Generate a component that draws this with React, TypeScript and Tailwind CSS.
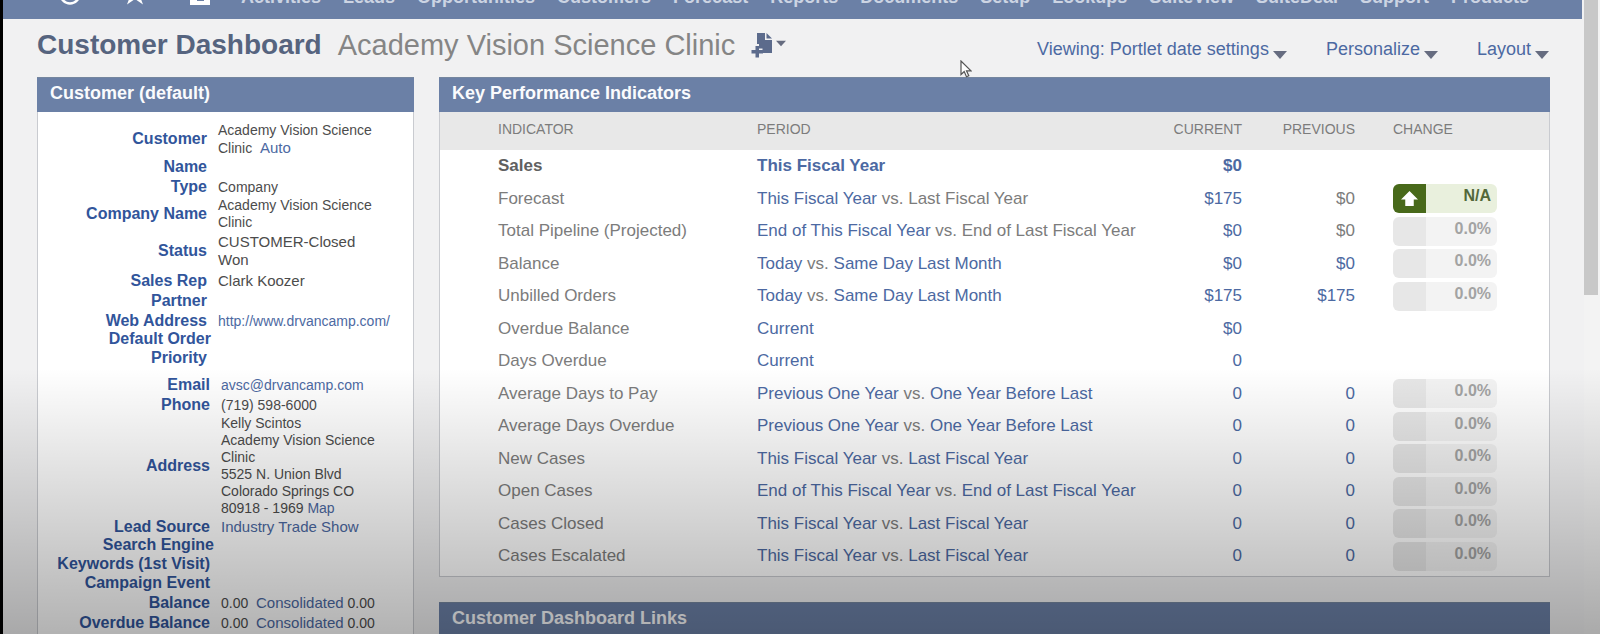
import type { ReactNode } from "react";

const navItems = [
  "Activities",
  "Leads",
  "Opportunities",
  "Customers",
  "Forecast",
  "Reports",
  "Documents",
  "Setup",
  "Lookups",
  "SuiteView",
  "SuiteDeal",
  "Support",
  "Products",
];

type Period = { text: string; link: boolean };

type Kpi = {
  name: string;
  period: Period;
  versus?: Period;
  current: string;
  previous?: string;
  previousLink?: boolean;
  change?: string;
  up?: boolean;
  bold?: boolean;
};

const link = (text: string): Period => ({ text, link: true });
const plain = (text: string): Period => ({ text, link: false });

const kpis: Kpi[] = [
  { name: "Sales", period: link("This Fiscal Year"), current: "$0", bold: true },
  { name: "Forecast", period: link("This Fiscal Year"), versus: plain("Last Fiscal Year"), current: "$175", previous: "$0", change: "N/A", up: true },
  { name: "Total Pipeline (Projected)", period: link("End of This Fiscal Year"), versus: plain("End of Last Fiscal Year"), current: "$0", previous: "$0", change: "0.0%" },
  { name: "Balance", period: link("Today"), versus: link("Same Day Last Month"), current: "$0", previous: "$0", previousLink: true, change: "0.0%" },
  { name: "Unbilled Orders", period: link("Today"), versus: link("Same Day Last Month"), current: "$175", previous: "$175", previousLink: true, change: "0.0%" },
  { name: "Overdue Balance", period: link("Current"), current: "$0" },
  { name: "Days Overdue", period: link("Current"), current: "0" },
  { name: "Average Days to Pay", period: link("Previous One Year"), versus: link("One Year Before Last"), current: "0", previous: "0", previousLink: true, change: "0.0%" },
  { name: "Average Days Overdue", period: link("Previous One Year"), versus: link("One Year Before Last"), current: "0", previous: "0", previousLink: true, change: "0.0%" },
  { name: "New Cases", period: link("This Fiscal Year"), versus: link("Last Fiscal Year"), current: "0", previous: "0", previousLink: true, change: "0.0%" },
  { name: "Open Cases", period: link("End of This Fiscal Year"), versus: link("End of Last Fiscal Year"), current: "0", previous: "0", previousLink: true, change: "0.0%" },
  { name: "Cases Closed", period: link("This Fiscal Year"), versus: link("Last Fiscal Year"), current: "0", previous: "0", previousLink: true, change: "0.0%" },
  { name: "Cases Escalated", period: link("This Fiscal Year"), versus: link("Last Fiscal Year"), current: "0", previous: "0", previousLink: true, change: "0.0%" },
];

const Link = ({ children }: { children: ReactNode }) => (
  <a href="#" className="text-[#4c69a2]">
    {children}
  </a>
);

const Caret = ({ className }: { className: string }) => (
  <svg viewBox="0 0 14 8" className={className} fill="#666c80" aria-hidden="true">
    <path d="M0 0h14L7 8z" />
  </svg>
);

const NavBar = () => (
  <nav className="mr-0.5 flex h-[19px] items-end overflow-hidden bg-[#6b80a6] pl-14">
    <div className="flex gap-[43px] pb-3.5 text-white">
      <a href="#" aria-label="Recent records">
        <svg viewBox="0 0 22 22" className="h-[22px] w-[22px]" fill="none" stroke="currentColor" strokeWidth="2.5">
          <circle cx="11" cy="11" r="9.5" />
          <path d="M11 5v6l4 2" />
        </svg>
      </a>
      <a href="#" aria-label="Shortcuts">
        <svg viewBox="0 0 22 22" className="h-[22px] w-[22px]" fill="currentColor">
          <path d="M11 0l3 8h8l-6.2 5 3.2 8.500-8-5.500-8 5.500 3.200-8.500L0 8h8z" />
        </svg>
      </a>
      <a href="#" aria-label="Home">
        <svg viewBox="0 0 22 22" className="h-[22px] w-[22px]" fill="currentColor">
          <path fillRule="evenodd" d="M1 2h20v20H1zM8 13v5h7v-5z" />
          <path d="M10 13h2v3h-2z" />
        </svg>
      </a>
    </div>
    <div className="ml-[30px] flex gap-[22px] pb-3 text-[18px] leading-5 font-bold whitespace-nowrap text-[#ccd4e3]">
      {navItems.map((item) => (
        <a key={item} href="#">
          {item}
        </a>
      ))}
    </div>
  </nav>
);

const PageHeader = () => (
  <header className="flex items-end justify-between pt-2.5 pr-[35px] pb-4 pl-[34px]">
    <div className="flex items-center whitespace-nowrap">
      <h1 className="text-[28px] leading-8 font-bold text-[#56647f]">Customer Dashboard</h1>
      <span className="ml-4 text-[29px] leading-8 text-[#858585]">Academy Vision Science Clinic</span>
      <button type="button" aria-label="Create new" className="ml-4 flex items-center gap-[3px]">
        <svg viewBox="0 0 22 26" className="h-[26px] w-[22px]" fill="#5c6b8c">
          <path d="M6 1h8v7h7v13H11.500v-4.500H8V12H6z" />
          <path d="M15.500 1l5.500 5.500h-5.500z" />
          <path d="M4.500 14h3.500v4h4v3.500H8v4H4.500v-4h-4V18h4z" />
        </svg>
        <Caret className="mb-1 h-[7px] w-2.5" />
      </button>
    </div>
    <div className="flex gap-[39px] text-[18px] leading-6 whitespace-nowrap text-[#4c69a2]">
      {["Viewing: Portlet date settings", "Personalize", "Layout"].map((label) => (
        <button key={label} type="button" className="flex items-end gap-1">
          {label}
          <Caret className="mb-0.5 h-2 w-3.5" />
        </button>
      ))}
    </div>
  </header>
);

const Portlet = ({ title, className, children }: { title: string; className?: string; children?: ReactNode }) => (
  <section className={`border border-[#c9cbd0] bg-white ${className ?? ""}`}>
    <h2 className="-mx-px -mt-px flex h-[35px] items-center border-t border-[#75869f] bg-[#6b80a6] px-[13px] pb-1 text-[18px] leading-6 font-bold text-[#fafbfd]">
      {title}
    </h2>
    {children}
  </section>
);

const Field = ({ label, wide, children }: { label: ReactNode; wide?: boolean; children?: ReactNode }) => (
  <div className="flex min-h-5 items-center">
    <dt className={`-mt-0.5 shrink-0 text-right text-[16px] leading-[19px] font-bold text-[#31559b] ${wide ? "w-[172px]" : "w-[169px]"}`}>
      {label}
    </dt>
    <dd className="ml-[11px] w-[176px] text-[14px] leading-[17px] text-[#4c4c4c]">{children}</dd>
  </div>
);

const CustomerPortlet = () => (
  <Portlet title="Customer (default)" className="w-[377px] shrink-0 pb-6">
    <dl className="pt-2.5">
      <Field label="Customer">
        Academy Vision Science
        <br />
        Clinic&nbsp; <span className="text-[15px] leading-[18px]"><Link>Auto</Link></span>
      </Field>
      <Field label="Name" />
      <Field label="Type">Company</Field>
      <Field label="Company Name">
        Academy Vision Science
        <br />
        Clinic
      </Field>
      <Field label="Status">
        <span className="block py-0.5 text-[15px] leading-[18px]">
          CUSTOMER-Closed
          <br />
          Won
        </span>
      </Field>
      <Field label="Sales Rep">
        <span className="text-[15px] leading-[18px]">Clark Koozer</span>
      </Field>
      <Field label="Partner" />
      <Field label="Web Address">
        <Link>http://www.drvancamp.com/</Link>
      </Field>
      <Field
        label={
          <>
            <span className="-mr-1 block">Default Order</span>
            Priority
          </>
        }
      />
    </dl>
    <dl className="pt-2">
      <Field wide label="Email">
        <Link>avsc@drvancamp.com</Link>
      </Field>
      <Field wide label="Phone">(719) 598-6000</Field>
      <Field wide label="Address">
        Kelly Scintos
        <br />
        Academy Vision Science
        <br />
        Clinic
        <br />
        5525 N. Union Blvd
        <br />
        Colorado Springs CO
        <br />
        80918 - 1969 <Link>Map</Link>
      </Field>
      <Field wide label="Lead Source">
        <span className="text-[15px] leading-[18px]">
          <Link>Industry Trade Show</Link>
        </span>
      </Field>
      <Field
        wide
        label={
          <>
            <span className="-mr-1 block">Search Engine</span>
            Keywords (1st Visit)
          </>
        }
      />
      <Field wide label="Campaign Event" />
      {["Balance", "Overdue Balance"].map((label) => (
        <Field key={label} wide label={label}>
          0.00&nbsp;{" "}
          <span className="text-[15px] leading-[18px]">
            <Link>Consolidated</Link>
          </span>{" "}
          0.00
        </Field>
      ))}
    </dl>
  </Portlet>
);

const ChangeBadge = ({ value, up }: { value: string; up?: boolean }) => (
  <div className="flex h-[29px] w-[104px] overflow-hidden rounded-md">
    <div className={`flex w-[33px] items-center justify-center ${up ? "bg-[#48691a]" : "bg-[#e7e7e7]"}`}>
      {up && (
        <svg viewBox="0 0 20 18" className="h-[17px] w-[19px]" fill="white" role="img" aria-label="Up">
          <path d="M10 1l9 9h-4.500v7h-9v-7H1z" />
        </svg>
      )}
    </div>
    <div className={`flex-1 pt-0.5 pr-1.5 text-right text-[16px] leading-5 font-bold ${up ? "bg-[#e9f0dd] text-[#53683a]" : "bg-[#f3f3f3] text-[#a3a3a3]"}`}>
      {value}
    </div>
  </div>
);

const PeriodText = ({ period }: { period: Period }) => (period.link ? <Link>{period.text}</Link> : <>{period.text}</>);

const KpiTable = () => (
  <table className="mb-1 w-full table-fixed text-[17px] leading-5 text-[#7c7c7c]">
    <thead>
      <tr className="h-[38px] bg-[#e8e8e8] text-left text-[14px]">
        <th className="w-[317px] pb-1 pl-[58px] font-normal">INDICATOR</th>
        <th className="pb-1 font-normal">PERIOD</th>
        <th className="w-[100px] pb-1 text-right font-normal">CURRENT</th>
        <th className="w-[113px] pb-1 text-right font-normal">PREVIOUS</th>
        <th className="w-[194px] pb-1 pl-[38px] font-normal">CHANGE</th>
      </tr>
    </thead>
    <tbody>
      {kpis.map((kpi) => (
        <tr key={kpi.name} className={`odd:h-8 even:h-[33px] ${kpi.bold ? "font-bold text-[#606060]" : ""}`}>
          <td className="pl-[58px]">{kpi.name}</td>
          <td className="whitespace-nowrap">
            <PeriodText period={kpi.period} />
            {kpi.versus && (
              <>
                {" vs. "}
                <PeriodText period={kpi.versus} />
              </>
            )}
          </td>
          <td className="text-right">
            <Link>{kpi.current}</Link>
          </td>
          <td className="text-right">{kpi.previousLink ? <Link>{kpi.previous}</Link> : kpi.previous}</td>
          <td className="pl-[38px]">{kpi.change && <ChangeBadge value={kpi.change} up={kpi.up} />}</td>
        </tr>
      ))}
    </tbody>
  </table>
);

const App = () => {
  return (
    <div className="relative flex h-screen overflow-hidden border-l-[3px] border-black bg-[#f1f1f2] font-['Liberation_Sans',Arial,sans-serif]">
      <div className="min-w-0 flex-1">
        <NavBar />
        <PageHeader />
        <main className="flex items-start gap-[25px] px-[34px]">
          <CustomerPortlet />
          <div className="flex min-w-0 flex-1 flex-col gap-[25px]">
            <Portlet title="Key Performance Indicators">
              <KpiTable />
            </Portlet>
            <Portlet title="Customer Dashboard Links" />
          </div>
        </main>
      </div>
      <div className="w-4 shrink-0 bg-[#f3f3f3]">
        <div className="h-[295px] w-3.5 bg-[#c8c8c8]" />
      </div>
      {/* mouse pointer */}
      <svg viewBox="0 0 12 18" className="absolute top-[60px] left-[957px] h-[18px] w-3" fill="white" stroke="#555" strokeWidth="1.2" aria-hidden="true">
        <path d="M1 1v13.500l3.200-3 2.300 5.300 2.300-1-2.300-5H11z" />
      </svg>
      {/* darkening towards the bottom edge */}
      <div className="pointer-events-none absolute inset-x-0 bottom-0 h-[266px] bg-gradient-to-b from-transparent to-black/30" />
    </div>
  );
};

export default App;
